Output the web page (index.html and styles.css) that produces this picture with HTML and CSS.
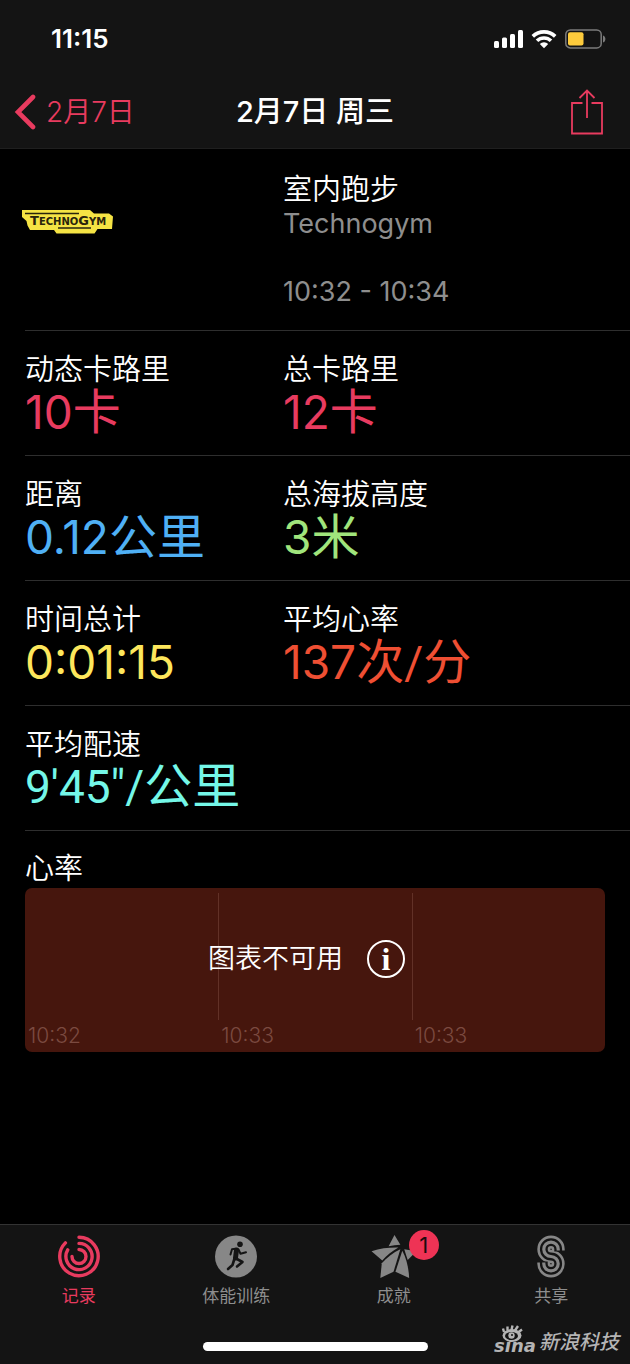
FILE: index.html
```html
<!DOCTYPE html>
<html lang="zh-CN">
<head>
    <meta charset="UTF-8">
    <meta name="viewport" content="width=device-width, initial-scale=1.0">
    <title>2月7日 周三</title>
    <link rel="stylesheet" href="styles.css">
</head>
<body>
    <header>
        <div class="status-bar">
            <span class="clock">11:15</span>
            <div class="status-icons">
                <svg width="29" height="20" viewBox="0 0 29 20" fill="#fff">
                    <rect x="0" y="12" width="5" height="7" rx="1.5"/>
                    <rect x="8" y="8.500" width="5" height="10.500" rx="1.5"/>
                    <rect x="16" y="5" width="5" height="14" rx="1.5"/>
                    <rect x="24" y="1" width="5" height="18" rx="1.5"/>
                </svg>
                <svg width="26" height="20" viewBox="0 0 26 20" fill="none" stroke="#fff" stroke-width="3.6">
                    <path d="M1.800 7.400a16 16 0 0 1 22.400 0"/>
                    <path d="M6 11.800a10 10 0 0 1 14 0"/>
                    <path d="M13 19.200l-4.200-4.300a6 6 0 0 1 8.400 0z" fill="#fff" stroke="none"/>
                </svg>
                <svg width="41" height="20" viewBox="0 0 41 20">
                    <rect x="0.800" y="0.900" width="35.400" height="18" rx="4.500" fill="none" stroke="#7b7b7b" stroke-width="1.500"/>
                    <rect x="3" y="3.200" width="15.500" height="13.300" rx="2" fill="#fdcb3c"/>
                    <path d="M38 6.500c3.200 1 3.200 6 0 7z" fill="#7b7b7b"/>
                </svg>
            </div>
        </div>
        <nav class="nav-bar">
            <a class="back" href="#">
                <svg width="22" height="36" viewBox="0 0 22 36" fill="none" stroke="currentColor" stroke-width="4.600" stroke-linecap="round">
                    <path d="M19 3L4 18l15 15"/>
                </svg>
                2月7日
            </a>
            <h1>2月7日 周三</h1>
            <button class="share" aria-label="分享">
                <svg width="34" height="46" viewBox="0 0 34 46" fill="none" stroke="currentColor" stroke-width="1.800">
                    <path d="M12.500 14H2v30.500h30V14H21.500"/>
                    <path d="M17 29V1.500M9.500 9L17 1.500 24.500 9"/>
                </svg>
            </button>
        </nav>
    </header>

    <main>
        <section class="row summary">
            <svg class="brand" width="92" height="26" viewBox="0 0 92 26">
                <path d="M0 1h68l4 3.500h15l4 3-1 12.500H75.500l-3 4.500H34.500L32 21H8l-2.500-4.500L4.500 12 0 8z" fill="#f5e344"/>
                <path d="M3 4.500h54M36 19h33" stroke="#29240c" stroke-width="1.600"/>
                <text x="8" y="16" class="brand-text"><tspan class="brand-cap">T</tspan>ECHNO<tspan class="brand-cap">G</tspan>YM</text>
            </svg>
            <div class="workout">
                <h2>室内跑步</h2>
                <p>Technogym</p>
                <p class="time">10:32 - 10:34</p>
            </div>
        </section>

        <dl class="row">
            <div>
                <dt>动态卡路里</dt>
                <dd class="pink">10<span class="unit">卡</span></dd>
            </div>
            <div>
                <dt>总卡路里</dt>
                <dd class="pink">12<span class="unit">卡</span></dd>
            </div>
        </dl>
        <dl class="row">
            <div>
                <dt>距离</dt>
                <dd class="blue">0.12<span class="unit">公里</span></dd>
            </div>
            <div>
                <dt>总海拔高度</dt>
                <dd class="green">3<span class="unit">米</span></dd>
            </div>
        </dl>
        <dl class="row">
            <div>
                <dt>时间总计</dt>
                <dd class="yellow">0:01:15</dd>
            </div>
            <div>
                <dt>平均心率</dt>
                <dd class="orange">137<span class="unit">次</span><span class="mark">/</span><span class="unit">分</span></dd>
            </div>
        </dl>
        <dl class="row">
            <div>
                <dt>平均配速</dt>
                <dd class="teal mark">9'45"/<span class="unit">公里</span></dd>
            </div>
        </dl>

        <section class="heart">
            <h2>心率</h2>
            <div class="chart">
                <div class="slot"><span>10:32</span></div>
                <div class="slot"><span>10:33</span></div>
                <div class="slot"><span>10:33</span></div>
                <div class="notice">
                    图表不可用
                    <button class="info" aria-label="信息">i</button>
                </div>
            </div>
        </section>
    </main>

    <footer>
        <nav class="tabs">
            <a class="tab active" href="#">
                <svg width="42" height="42" viewBox="0 0 42 42" fill="none" stroke="currentColor" stroke-width="3.400" stroke-linecap="round">
                    <path d="M21 1.800A19.200 19.200 0 1 1 7.400 7.400"/>
                    <path d="M21 7.900A13.100 13.100 0 1 1 9.700 14.400"/>
                    <path d="M21 14A7 7 0 1 1 14 21"/>
                </svg>
                记录
            </a>
            <a class="tab" href="#">
                <svg width="42" height="42" viewBox="0 0 42 42">
                    <circle cx="21" cy="21" r="21" fill="#878787"/>
                    <circle cx="25" cy="8.700" r="2.800" fill="#141414"/>
                    <g fill="none" stroke="#141414" stroke-linecap="round" stroke-linejoin="round">
                        <path d="M21.500 14.500l-1 8" stroke-width="5"/>
                        <path d="M20.500 13.300l-3.500.5-1.500 5.200M23.500 14l2 4.200 5.500-1.500" stroke-width="2"/>
                        <path d="M21 23l6.500 3.500-5.500 4.500" stroke-width="2.600"/>
                        <path d="M19.500 23l-2 6.500-4.500 4" stroke-width="2.600"/>
                    </g>
                </svg>
                体能训练
            </a>
            <a class="tab" href="#">
                <span class="tab-icon">
                    <svg width="46" height="44" viewBox="0 0 46 44" fill="#878787">
                        <path d="M23.500 0L29.500 10c-4 .1-8 .5-12 1.500z"/>
                        <path d="M0 16.500c9-3 18-4 27.500-3.800C21.500 16 15.500 20.500 11 26z"/>
                        <path d="M29.500 14.500L22.500 37.500 9 44l1.500-15C15.500 23 22 18 29.500 14.500z"/>
                        <path d="M31.500 16c4.500 8.500 6.500 18 7 28l-14-6.500z"/>
                        <path d="M33.500 14.500L46 16.500l-9 9z"/>
                    </svg>
                    <span class="badge">1</span>
                </span>
                成就
            </a>
            <a class="tab" href="#">
                <svg width="28" height="43" viewBox="0 0 28 43" fill="none">
                    <path d="M21.200 15.500v-1.200A7.200 7.200 0 1 0 14 21.500a7.200 7.200 0 1 1-7.200 7.200v-1.200" stroke="#878787" stroke-width="13"/>
                    <path d="M21.200 16.500v-2.200A7.200 7.200 0 1 0 14 21.500a7.200 7.200 0 1 1-7.200 7.200v-2.200" stroke="#141414" stroke-width="7.800"/>
                    <path d="M21.200 15.500v-1.200A7.200 7.200 0 1 0 14 21.500a7.200 7.200 0 1 1-7.200 7.200v-1.200" stroke="#878787" stroke-width="3.200"/>
                </svg>
                共享
            </a>
        </nav>
        <div class="home-indicator"></div>
        <div class="watermark">
            <svg width="46" height="36" viewBox="0 0 46 36">
                <text x="1" y="28" class="sina">sina</text>
                <ellipse cx="19" cy="11.500" rx="9.500" ry="6.500" fill="#b4b4b4"/>
                <ellipse cx="18.500" cy="12" rx="6.500" ry="4" fill="#141414"/>
                <circle cx="18.500" cy="11.500" r="3.200" fill="#b4b4b4"/>
                <circle cx="19" cy="11" r="1" fill="#141414"/>
                <path d="M11 8l-1-3.500M14.500 6.500l0-4M18.500 6l1-4.500M22 6.500l3-4.500M25 8.500l4-3" stroke="#b4b4b4" stroke-width="2.400"/>
            </svg>
            <span>新浪科技</span>
        </div>
    </footer>
</body>
</html>
```

FILE: styles.css
```css
* {
    box-sizing: border-box;
}
body {
    margin: 0;
    min-height: 100vh;
    display: flex;
    flex-direction: column;
    background-color: #000;
    color: #fff;
    font-family: Inter, "Noto Sans CJK SC", sans-serif;
    font-size: 28px;
    font-weight: 350;
    line-height: 34px;
}
h1, h2, p, dl, dd {
    margin: 0;
    font-size: inherit;
    font-weight: inherit;
}
a {
    color: inherit;
    text-decoration: none;
}
button {
    padding: 0;
    border: none;
    background: none;
    color: inherit;
    cursor: pointer;
}
svg {
    display: block;
}
header {
    background-color: #141414;
    border-bottom: 1px solid #1f1f1f;
}
.status-bar {
    display: flex;
    justify-content: space-between;
    align-items: center;
    height: 76px;
    padding: 2px 24px 0 51px;
}
.clock {
    font-size: 26px;
    font-weight: 600;
}
.status-icons {
    display: flex;
    gap: 8px;
}
.nav-bar {
    display: grid;
    grid-template-columns: 1fr auto 1fr;
    align-items: center;
    height: 72px;
    padding: 0 14px;
}
.nav-bar h1 {
    font-size: 29px;
    font-weight: 500;
}
.back {
    display: flex;
    align-items: center;
    gap: 10px;
    color: #e83b5f;
}
.share {
    justify-self: end;
    margin-right: 12px;
    color: #e83b5f;
}
main {
    flex: 1;
}
.row {
    display: grid;
    grid-template-columns: 258px 1fr;
    margin-left: 25px;
    padding: 22px 0 18px;
    border-bottom: 1px solid #2e2e2e;
}
.summary {
    padding: 24px 0 21px;
}
.brand {
    margin: 36px 0 0 -3px;
}
.brand-text {
    font-family: "DejaVu Sans", Verdana, sans-serif;
    font-size: 10px;
    font-weight: bold;
    fill: #29240c;
}
.brand-cap {
    font-size: 13px;
}
.workout p {
    color: #8e8e8e;
    font-size: 27px;
    font-weight: 400;
}
.workout .time {
    margin-top: 34px;
}
dt, h2 {
    font-size: 29px;
}
dd {
    font-size: 46px;
    font-weight: 400;
    line-height: 50px;
    height: 50px;
    white-space: nowrap;
}
.unit {
    font-size: 48px;
    line-height: 40px;
}
/* narrower slash and prime marks */
.mark {
    font-family: Roboto, "Noto Sans CJK SC", sans-serif;
}
.pink {
    color: #e83b5f;
}
.blue {
    color: #4fb0f5;
}
.green {
    color: #a0e57c;
}
.yellow {
    color: #fde75c;
}
.orange {
    color: #ef4f33;
}
.teal {
    color: #74f7e8;
}
.heart {
    padding: 21px 25px;
}
.chart {
    position: relative;
    display: grid;
    grid-template-columns: repeat(3, 1fr);
    height: 164px;
    margin-top: 2px;
    padding-top: 5px;
    border-radius: 7px;
    background-color: #46160d;
}
.slot {
    display: flex;
    flex-direction: column;
    justify-content: flex-end;
    color: #7b4a40;
    font-size: 21px;
    line-height: 32px;
}
.slot::before {
    content: "";
    flex: 1;
    border-left: 1px solid #623127;
}
.slot:first-child::before {
    border-color: transparent;
}
.slot span {
    padding-left: 3px;
}
.notice {
    position: absolute;
    inset: 0 0 22px;
    display: flex;
    justify-content: center;
    align-items: center;
    gap: 24px;
    padding-right: 17px;
    font-size: 27px;
}
.info {
    width: 38px;
    height: 38px;
    border: 2px solid #fff;
    border-radius: 50%;
    font-family: "Liberation Serif", serif;
    font-size: 32px;
    font-weight: bold;
    line-height: 32px;
}
footer {
    position: relative;
    height: 140px;
    background-color: #141414;
    border-top: 1px solid #333;
}
.tabs {
    display: flex;
    height: 117px;
    padding-top: 10px;
}
.tab {
    flex: 1;
    display: flex;
    flex-direction: column;
    align-items: center;
    color: #8e8e8e;
    font-size: 17px;
    font-weight: 400;
    line-height: 36px;
}
.tab svg {
    height: 43px;
}
.tab.active {
    color: #e83b5f;
}
.tab-icon {
    position: relative;
}
.badge {
    position: absolute;
    top: -5px;
    right: -22px;
    width: 30px;
    height: 30px;
    border-radius: 50%;
    background-color: #ee3355;
    color: #1a0a0d;
    font-size: 22px;
    line-height: 30px;
    text-align: center;
}
.home-indicator {
    width: 225px;
    height: 9px;
    margin: 0 auto;
    border-radius: 5px;
    background-color: #fff;
}
.watermark {
    position: absolute;
    right: 11px;
    bottom: 4px;
    display: flex;
    align-items: center;
    color: #b4b4b4;
    font-size: 20px;
    font-style: italic;
    font-weight: 500;
}
.sina {
    fill: #b4b4b4;
    font-family: "DejaVu Sans", Verdana, sans-serif;
    font-size: 18px;
    font-style: italic;
    font-weight: bold;
}
```
